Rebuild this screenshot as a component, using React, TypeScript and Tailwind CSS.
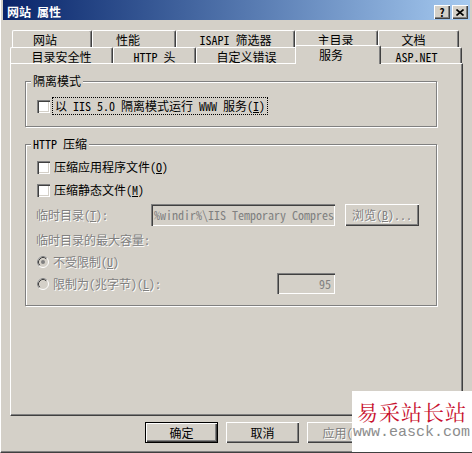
import React from "react";

const face = "font-['Noto_Sans_Mono_CJK_SC','Noto_Sans_CJK_SC',sans-serif]";
const raised =
  "shadow-[inset_1px_1px_0_#fff,inset_-1px_-1px_0_#404040,inset_-2px_-2px_0_#808080]";
const sunken =
  "shadow-[inset_1px_1px_0_#808080,inset_2px_2px_0_#404040,inset_-1px_-1px_0_#fff,inset_-2px_-2px_0_#d4d0c8]";
const dim = "text-[#808080] [text-shadow:1px_1px_0_#fff]";

type TabItem = { label: string; w: string; pad: string; active?: boolean };

const backRow: TabItem[] = [
  { label: "网站", w: "w-[80px]", pad: "pr-[14px]" },
  { label: "性能", w: "w-[84px]", pad: "pr-[12px]" },
  { label: "ISAPI 筛选器", w: "w-[119px]", pad: "" },
  { label: "主目录", w: "w-[83px]", pad: "pr-[2px]" },
  { label: "文档", w: "w-[81px]", pad: "pr-[10px]" },
];

const frontRow: TabItem[] = [
  { label: "目录安全性", w: "w-[103px]", pad: "" },
  { label: "HTTP 头", w: "w-[83px]", pad: "" },
  { label: "自定义错误", w: "w-[101px]", pad: "" },
  { label: "服务", w: "w-[86px]", pad: "pr-[14px]", active: true },
  { label: "ASP.NET", w: "w-[83px]", pad: "pr-[8px]" },
];

const Tab = ({ item, h }: { item: TabItem; h: string }) =>
  item.active ? (
    <div
      className={`relative z-10 -mx-[2px] -mt-[2px] h-[19px] ${item.w} shrink-0 bg-[#d4d0c8] border-t border-l border-white border-r border-r-[#404040] shadow-[inset_-1px_0_0_#808080] rounded-t-[2px] flex justify-center pt-[2px] ${item.pad}`}
    >
      {item.label}
    </div>
  ) : (
    <div
      className={`${h} ${item.w} shrink-0 border-t border-l border-white border-r border-r-[#404040] shadow-[inset_-1px_0_0_#808080] rounded-t-[2px] flex justify-center pt-[2px] whitespace-nowrap ${item.pad}`}
    >
      {item.label}
    </div>
  );

const Check = () => (
  <span className={`block w-[13px] h-[13px] shrink-0 bg-white ${sunken}`} />
);

const Radio = ({ checked }: { checked?: boolean }) => (
  <svg width="12" height="12" viewBox="0 0 12 12" className="shrink-0">
    <circle cx="6" cy="6" r="4.5" fill="#d4d0c8" />
    <circle cx="6" cy="6" r="5.5" fill="none" stroke="#fff" />
    <path d="M2.11 9.89A5.5 5.5 0 0 1 9.89 2.11" fill="none" stroke="#808080" />
    <path d="M2.82 9.18A4.5 4.5 0 0 1 9.18 2.82" fill="none" stroke="#404040" />
    {checked && <circle cx="6" cy="6" r="2" fill="#808080" />}
  </svg>
);

const Group = ({
  title,
  h,
  children,
}: {
  title: string;
  h: string;
  children: React.ReactNode;
}) => (
  <div
    className={`relative mt-[17px] w-[412px] ${h} shrink-0 border border-[#808080] shadow-[inset_1px_1px_0_#fff,1px_1px_0_#fff] flex flex-col`}
  >
    <span className="absolute -top-[8px] left-[5px] px-[2px] bg-[#d4d0c8] whitespace-nowrap">
      {title}
    </span>
    {children}
  </div>
);

const Button = ({
  children,
  primary,
  disabled,
}: {
  children: React.ReactNode;
  primary?: boolean;
  disabled?: boolean;
}) => (
  <div
    className={`w-[73px] h-[21px] flex items-center justify-center ${raised} ${
      primary ? "border border-black" : ""
    } ${disabled ? dim : ""}`}
  >
    {children}
  </div>
);

export default function App() {
  return (
    <div
      className={`relative w-[472px] h-[453px] overflow-hidden bg-[#d4d0c8] border-l border-l-white border-b border-b-[#404040] shadow-[inset_0_-1px_0_#808080] ${face} text-[12px] leading-[14px] text-black flex flex-col`}
    >
      {/* Title bar */}
      <div className="mx-[2px] h-[20px] shrink-0 flex items-end pb-[1px] pl-[4px] pr-[2px] bg-linear-to-r from-[#0a246a] to-[#a6caf0]">
        <span className="text-white font-bold whitespace-nowrap">网站 属性</span>
        <div className="ml-auto flex gap-[2px]">
          <div
            className={`w-[16px] h-[14px] bg-[#d4d0c8] ${raised} flex items-center justify-center font-bold text-[11px] leading-[11px]`}
          >
            ?
          </div>
          <div
            className={`w-[16px] h-[14px] bg-[#d4d0c8] ${raised} flex items-center justify-center`}
          >
            <svg width="8" height="7" viewBox="0 0 8 7">
              <path d="M0.5 0.5L7.5 6.5M7.5 0.5L0.5 6.5" stroke="#000" strokeWidth="1.6" />
            </svg>
          </div>
        </div>
      </div>

      {/* Tab control */}
      <div className="ml-[9px] mt-[10px] w-[453px] flex flex-col">
        <div className="flex pl-[2px] h-[17px]">
          {backRow.map((t) => (
            <Tab key={t.label} item={t} h="h-[17px]" />
          ))}
        </div>
        <div className="flex h-[16px]">
          {frontRow.map((t) => (
            <Tab key={t.label} item={t} h="h-[16px]" />
          ))}
        </div>

        {/* Panel */}
        <div className="h-[353px] border-t border-l border-white border-r border-b border-r-[#404040] border-b-[#404040] shadow-[inset_-1px_-1px_0_#808080] flex flex-col pl-[14px]">
          <Group title="隔离模式" h="h-[46px]">
            <div className="mt-[15px] ml-[11px] h-[18px] flex items-center">
              <Check />
              <span className="ml-[2px] h-[18px] px-[2px] flex items-center border border-dotted border-black whitespace-nowrap">
                以 IIS 5.0 隔离模式运行 WWW 服务(<u>I</u>)
              </span>
            </div>
          </Group>

          <Group title="HTTP 压缩" h="h-[162px]">
            <div className="mt-[12px] ml-[11px] h-[20px] flex items-center">
              <Check />
              <span className="ml-[4px] whitespace-nowrap">
                压缩应用程序文件(<u>O</u>)
              </span>
            </div>
            <div className="mt-[3px] ml-[11px] h-[20px] flex items-center">
              <Check />
              <span className="ml-[4px] whitespace-nowrap">
                压缩静态文件(<u>M</u>)
              </span>
            </div>
            <div className="mt-[4px] ml-[10px] h-[22px] flex items-center">
              <span className={`w-[115px] whitespace-nowrap ${dim}`}>
                临时目录(<u>T</u>):
              </span>
              <div
                className={`w-[184px] h-[22px] ${sunken} flex items-center pl-[3px] overflow-hidden whitespace-nowrap text-[#808080]`}
              >
                %windir%\IIS Temporary Compres
              </div>
              <div
                className={`ml-[10px] w-[74px] h-[22px] ${raised} flex items-center justify-center whitespace-nowrap ${dim}`}
              >
                浏览(<u>B</u>)...
              </div>
            </div>
            <div className={`mt-[4px] ml-[10px] h-[20px] flex items-center whitespace-nowrap ${dim}`}>
              临时目录的最大容量:
            </div>
            <div className="mt-[2px] ml-[11px] h-[20px] flex items-center">
              <Radio checked />
              <span className={`ml-[4px] whitespace-nowrap ${dim}`}>
                不受限制(<u>U</u>)
              </span>
            </div>
            <div className="mt-[1px] ml-[11px] h-[21px] flex items-center">
              <Radio />
              <span className={`ml-[4px] w-[224px] whitespace-nowrap ${dim}`}>
                限制为(兆字节)(<u>L</u>):
              </span>
              <div
                className={`w-[58px] h-[21px] ${sunken} flex items-center justify-end pr-[4px] text-[#808080]`}
              >
                95
              </div>
            </div>
          </Group>
        </div>
      </div>

      {/* Dialog buttons */}
      <div className="mt-[6px] ml-[144px] flex gap-[8px]">
        <Button primary>确定</Button>
        <Button>取消</Button>
        <Button disabled>
          应用(<u>A</u>)
        </Button>
      </div>

      {/* Watermark */}
      <div className="absolute right-0 bottom-0 w-[120px] h-[61px] bg-white flex flex-col pl-[5px]">
        <span className="mt-[8px] text-[21px] leading-[24px] tracking-[1px] text-[#c8102e] whitespace-nowrap font-['Noto_Serif_CJK_SC','Noto_Sans_CJK_SC',serif]">
          易采站长站
        </span>
        <span className="mt-[2px] -ml-[4px] text-[15px] leading-[16px] text-[#8c8c8c] whitespace-nowrap font-['Liberation_Mono',monospace]">
          www.easck.com
        </span>
      </div>
    </div>
  );
}
